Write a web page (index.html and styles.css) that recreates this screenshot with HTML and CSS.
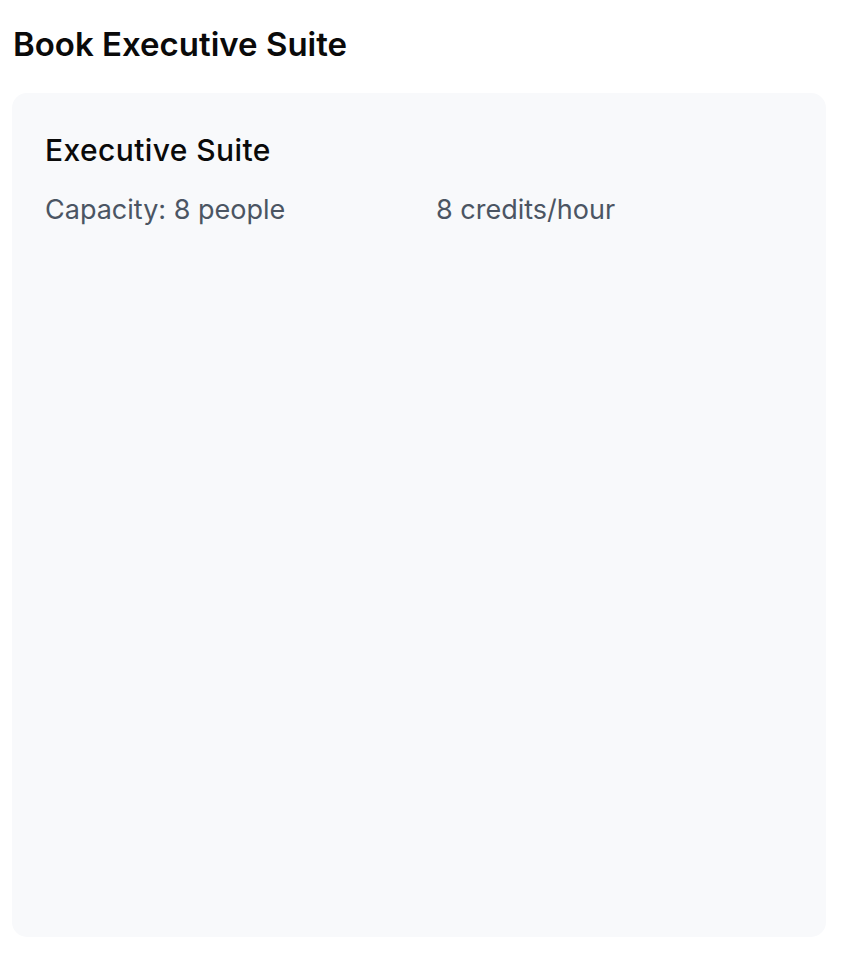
FILE: index.html
```html
<!DOCTYPE html>
<html>
<head>
<meta charset="utf-8">
<link rel="stylesheet" href="styles.css">
</head>
<body>
<div class="page">
  <h1 class="page-title">Book Executive Suite</h1>
  <div class="card">
    <h2 class="room-name">Executive Suite</h2>
    <div class="room-meta">
      <span class="meta-item">Capacity: 8 people</span>
      <span class="meta-item">8 credits/hour</span>
    </div>
  </div>
</div>
</body>
</html>
```
FILE: styles.css
```css
html, body {
  margin: 0;
  padding: 0;
  background: #ffffff;
}
body {
  font-family: Inter, "Noto Sans", sans-serif;
  color: #0a0a0a;
}
.page {
  padding: 24px 30px 35px 12px;
}
.page-title {
  margin: 0 0 29px 1px;
  font-size: 33px;
  font-weight: 600;
  line-height: 40px;
}
.card {
  background: #f8f9fb;
  border-radius: 15px;
  height: 844px;
  box-sizing: border-box;
  padding: 39px 33px;
}
.room-name {
  margin: 0 0 24px 0;
  font-size: 30px;
  font-weight: 500;
  line-height: 36px;
  letter-spacing: 0.4px;
}
.room-meta {
  display: grid;
  grid-template-columns: 391px auto;
  font-size: 27px;
  line-height: 36px;
  color: #4b5563;
}
```
